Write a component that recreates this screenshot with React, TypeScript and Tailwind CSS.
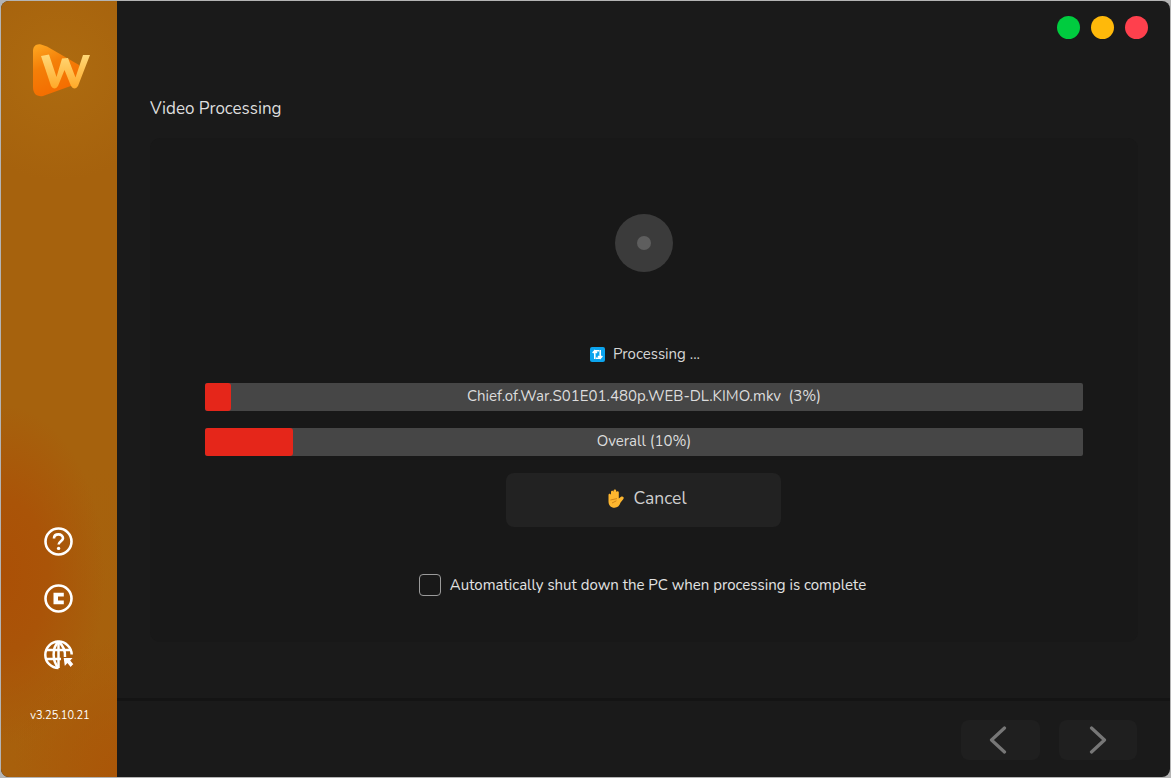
import React from "react";

const font = "font-['Nunito','Lato','Noto_Sans',sans-serif]";

const Logo = () => (
  <svg width="58" height="54" viewBox="0 0 58 54" fill="none">
    <defs>
      <linearGradient id="logoBody" x1="0" y1="0" x2="0.4" y2="1">
        <stop offset="0" stopColor="#ffa922" />
        <stop offset="0.45" stopColor="#f47f08" />
        <stop offset="1" stopColor="#f46c00" />
      </linearGradient>
      <linearGradient id="logoW" x1="0" y1="0" x2="0" y2="1">
        <stop offset="0" stopColor="#ffd877" />
        <stop offset="1" stopColor="#ffa928" />
      </linearGradient>
    </defs>
    <path d="M8 .5 C3 -.5 0 2.5 0 7 L0 43 C0 50 4 53 10 52 L46 39 L46 21 L14 2.5 Z" fill="url(#logoBody)" />
    <path d="M8 12 L16 10.5 L23.5 33 L29 14.5 L35 14 L42.5 33.5 L50 11 L57 11 L45 42 Q41.5 47 38 42 L31.5 26 L25 42 Q21.5 47 18 42 Z" fill="url(#logoW)" />
  </svg>
);

const HelpIcon = () => (
  <svg width="29" height="29" viewBox="0 0 29 29" fill="none" stroke="#fff" strokeWidth="2.6">
    <circle cx="14.5" cy="14.5" r="13" />
    <path d="M10 11.5 C10 8.8 12 7.4 14.5 7.4 C17 7.4 19 9 19 11.2 C19 14 14.6 14.4 14.6 17.6" />
    <circle cx="14.6" cy="21.4" r="1.7" fill="#fff" stroke="none" />
  </svg>
);

const CopyrightIcon = () => (
  <svg width="29" height="29" viewBox="0 0 29 29" fill="none" stroke="#fff" strokeWidth="2.6">
    <circle cx="14.5" cy="14.5" r="13" />
    <path d="M9.5 8.8 L19.8 8.8 L19.8 12.4 L14 12.4 L14 16.6 L19.8 16.6 L19.8 20.2 L9.5 20.2 Z" fill="#fff" stroke="none" />
  </svg>
);

const GlobeIcon = () => (
  <svg width="30" height="30" viewBox="0 0 30 30" fill="none" stroke="#fff" strokeWidth="2.5">
    <path d="M14.5 28 A13.2 13.2 0 1 1 27.7 14.5" />
    <path d="M14.5 1.5 C8 8 8 21 14.5 28" />
    <path d="M14.5 1.5 C20.5 7 21.5 12 21 17" />
    <path d="M2.5 10 L27 10 M2.5 19 L17 19" />
    <path d="M14.5 1.5 L14.5 28" />
    <path d="M19 17.5 L30 17.5 L27 20.6 L30 24.2 L26.6 27.8 L23.4 24 L20.4 27.4 Z" fill="#fff" stroke="#a9590c" strokeWidth="1.2" />
  </svg>
);

const ProcessIcon = () => (
  <svg width="15" height="15" viewBox="0 0 15 15" fill="none">
    <rect width="15" height="15" rx="2" fill="#0ca4ee" />
    <path d="M4.8 12 L4.8 3.8 L9 3.8 M2.7 6 L4.8 3.6 L6.9 6" stroke="#fff" strokeWidth="1.6" />
    <path d="M10.2 3 L10.2 11.2 L6 11.2 M8.1 9 L10.2 11.4 L12.3 9" stroke="#fff" strokeWidth="1.6" />
  </svg>
);

const HandIcon = () => (
  <svg width="18" height="19" viewBox="0 0 18 19">
    <path d="M1.5 6 C1.5 4.4 3.8 4.4 4 6 L4 3 C4 1.4 6.4 1.4 6.5 3 L6.6 1.6 C6.8 .1 9.2 .2 9.2 1.8 L9.3 3 C9.5 1.8 11.8 1.8 11.8 3.4 L11.8 9.4 L14 7.8 C15.6 6.8 17.6 8.4 16.4 10 L13.6 13.6 C12.4 17 10.4 18.8 7.6 18.8 C3.6 18.8 1.5 16 1.5 12.5 Z" fill="#fdb62f" />
    <path d="M3.4 11 L10 9.6 M5 14 L9.4 11.8" stroke="#c97f16" strokeWidth="0.9" fill="none" />
  </svg>
);

const Chevron = ({ d }: { d: string }) => (
  <svg width="18" height="28" viewBox="0 0 18 28" fill="none" stroke="#777777" strokeWidth="3.2" strokeLinecap="round" strokeLinejoin="round">
    <path d={d} />
  </svg>
);

const ProgressRow = ({ label, percent }: { label: string; percent: number }) => (
  <div className="relative h-7 bg-[#464646] rounded-[2px] flex items-center justify-center">
    <div className="absolute left-0 top-0 h-7 bg-[#e5261a] rounded-[3px]" style={{ width: `${percent}%` }} />
    <span className="relative text-[15px] leading-[26px] pb-[2px] text-[#dcdcdc] whitespace-pre">{label}</span>
  </div>
);

const App = () => {
  return (
    <div className={`w-[1171px] h-[778px] bg-[#b4b4b4] p-px overflow-hidden ${font}`}>
      <div className="w-full h-full flex rounded-[8px] overflow-hidden bg-[#1a1a1a]">
        <aside className="w-[116px] shrink-0 flex flex-col items-center bg-[radial-gradient(ellipse_90%_22%_at_0%_74%,#ab5006_0%,#aa5408_45%,transparent_100%),radial-gradient(ellipse_90%_18%_at_100%_100%,#aa5608_0%,transparent_100%),radial-gradient(circle_at_50%_9%,#ad6b10_0%,transparent_110px),linear-gradient(180deg,#a6620d_0%,#a6620d_60%,#a8600c_100%)]">
          <div className="mt-[43px] ml-[5px]"><Logo /></div>
          <div className="flex-1" />
          <div className="flex flex-col items-center gap-[28px] -ml-[2px]">
            <HelpIcon />
            <CopyrightIcon />
            <div className="-mt-[1px] mb-[1px] ml-[1px]"><GlobeIcon /></div>
          </div>
          <div className="mt-[38px] mb-[54px] text-[11px] leading-[14px] text-white ml-[2px]">v3.25.10.21</div>
        </aside>
        <main className="flex-1 flex flex-col">
          <div className="h-[137px] pl-[33px] pr-[22px] flex flex-col">
            <div className="flex justify-end gap-[11px] pt-[15px]">
              <span className="w-[23px] h-[23px] rounded-full bg-[#00cc3f]" />
              <span className="w-[23px] h-[23px] rounded-full bg-[#ffb90a]" />
              <span className="w-[23px] h-[23px] rounded-full bg-[#ff404d]" />
            </div>
            <h1 className="mt-[58px] text-[17px] leading-[24px] font-normal text-[#dedede]">Video Processing</h1>
          </div>
          <section className="ml-[33px] mr-[32px] h-[504px] rounded-[10px] bg-[#181818] flex flex-col items-center px-[55px]">
            <div className="mt-[76px] w-[58px] h-[58px] rounded-full bg-[#3b3b3b] flex items-center justify-center">
              <div className="w-[14px] h-[14px] rounded-full bg-[#5e5e5e]" />
            </div>
            <div className="mt-[72px] h-[20px] flex items-center gap-2 text-[15px] text-[#d6d6d6] ml-[2px]">
              <ProcessIcon />
              <span>Processing ...</span>
            </div>
            <div className="mt-[19px] w-full flex flex-col gap-[17px]">
              <ProgressRow label="Chief.of.War.S01E01.480p.WEB-DL.KIMO.mkv  (3%)" percent={3} />
              <ProgressRow label="Overall (10%)" percent={10} />
            </div>
            <button className="mt-[17px] mr-[2px] w-[275px] h-[54px] rounded-[8px] bg-[#222222] pl-[8px] flex items-center justify-center gap-[8px] text-[17.5px] text-[#cfcfcf]">
              <span className="flex -mt-[3px]"><HandIcon /></span>
              <span className="pb-[3px]">Cancel</span>
            </button>
            <label className="mt-[47px] flex items-center gap-[9px] text-[15px] text-[#e2e2e2] mr-[3px]">
              <span className="w-[22px] h-[22px] rounded-[4px] border border-[#9a9a9a]" />
              <span>Automatically shut down the PC when processing is complete</span>
            </label>
          </section>
          <div className="mt-[56px] h-[3px] bg-[#141414]" />
          <footer className="flex-1 flex justify-end gap-[19px] pr-[33px] pt-[19px]">
            <button className="w-[79px] h-[40px] rounded-[8px] bg-[#1f1f1f] flex items-center justify-center">
              <span className="mr-[6px] flex"><Chevron d="M15.5 2 L2.5 14 L15.5 26" /></span>
            </button>
            <button className="w-[78px] h-[40px] rounded-[8px] bg-[#1f1f1f] flex items-center justify-center">
              <Chevron d="M2.5 2 L15.5 14 L2.5 26" />
            </button>
          </footer>
        </main>
      </div>
    </div>
  );
};

export default App;
